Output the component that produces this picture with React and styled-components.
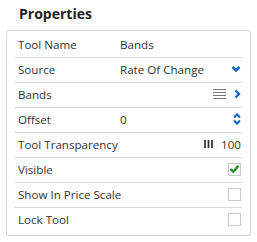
import React from 'react';
import styled, { createGlobalStyle } from 'styled-components';

const GlobalStyle = createGlobalStyle`
  body {
    margin: 0;
    background: #fff;
    font-family: "Open Sans", "Liberation Sans", sans-serif;
    color: #333;
  }
`;

const Wrap = styled.div`
  padding: 4px 6px 0 6px;
  width: 245px;
`;

const Title = styled.h2`
  margin: 0 0 6px 13px;
  font-size: 14px;
  font-weight: 700;
  line-height: 20px;
  color: #222;
`;

const Panel = styled.div`
  border: 1px solid #d4d4d4;
  border-radius: 3px;
  padding: 1px 8px 2px 8px;
`;

const Row = styled.div`
  box-sizing: border-box;
  display: flex;
  align-items: center;
  height: ${p => (p.first ? '26px' : '25px')};
  padding: ${p => (p.first ? '1px' : '0')} 1px 2px 3px;
  border-bottom: ${p => (p.last ? 'none' : '1px solid #d9d9d9')};
  font-size: 11.6px;
`;

const Label = styled.div`
  width: 102px;
  flex-shrink: 0;
  white-space: nowrap;
`;

const Value = styled.div`
  flex: 1;
  white-space: nowrap;
`;

const Control = styled.div`
  display: flex;
  align-items: center;
  gap: 8px;
`;

const Box = styled.div`
  width: 11px;
  height: 11px;
  border: 1px solid #c8c8c8;
  background: #fff;
  display: flex;
  align-items: center;
  justify-content: center;
`;

const Blue = '#1468c0';

const ChevronDown = () => (
  <svg width="10" height="8" viewBox="0 0 10 8">
    <polyline points="1.5,2 5,5.5 8.5,2" fill="none" stroke={Blue} strokeWidth="2.6" />
  </svg>
);

const ChevronRight = () => (
  <svg width="7" height="10" viewBox="0 0 7 10">
    <polyline points="1.5,1.5 5,5 1.5,8.5" fill="none" stroke={Blue} strokeWidth="2.4" />
  </svg>
);

const Lines = () => (
  <svg width="13" height="11" viewBox="0 0 13 11">
    {[0.5, 3.5, 6.5, 9.5].map(y => (
      <line key={y} x1="0" x2="13" y1={y} y2={y} stroke="#777" strokeWidth="1" />
    ))}
  </svg>
);

const Spinner = () => (
  <svg width="8" height="12" viewBox="0 0 8 12">
    <polyline points="1,4.5 4,1.5 7,4.5" fill="none" stroke={Blue} strokeWidth="2.2" />
    <polyline points="1,7.5 4,10.5 7,7.5" fill="none" stroke={Blue} strokeWidth="2.2" />
  </svg>
);

const Bars = () => (
  <svg width="9" height="8" viewBox="0 0 9 8">
    {[1, 4.5, 8].map(x => (
      <line key={x} x1={x} x2={x} y1="0" y2="8" stroke="#333" strokeWidth="1.8" />
    ))}
  </svg>
);

const Check = () => (
  <svg width="11" height="10" viewBox="0 0 11 10">
    <polyline points="1.5,5 4.2,7.8 9.5,1.8" fill="none" stroke="#1f8f1f" strokeWidth="2.4" />
  </svg>
);

const Checkbox = ({ checked }) => <Box>{checked && <Check />}</Box>;

export default function App() {
  return (
    <>
      <GlobalStyle />
      <Wrap>
        <Title>Properties</Title>
        <Panel>
          <Row first>
            <Label>Tool Name</Label>
            <Value>Bands</Value>
          </Row>
          <Row>
            <Label>Source</Label>
            <Value>Rate Of Change</Value>
            <Control><ChevronDown /></Control>
          </Row>
          <Row>
            <Label>Bands</Label>
            <Value />
            <Control><Lines /><ChevronRight /></Control>
          </Row>
          <Row>
            <Label>Offset</Label>
            <Value>0</Value>
            <Control><Spinner /></Control>
          </Row>
          <Row>
            <Label>Tool Transparency</Label>
            <Value />
            <Control><Bars /><span>100</span></Control>
          </Row>
          <Row>
            <Label>Visible</Label>
            <Value />
            <Control><Checkbox checked /></Control>
          </Row>
          <Row>
            <Label>Show In Price Scale</Label>
            <Value />
            <Control><Checkbox /></Control>
          </Row>
          <Row last>
            <Label>Lock Tool</Label>
            <Value />
            <Control><Checkbox /></Control>
          </Row>
        </Panel>
      </Wrap>
    </>
  );
}
